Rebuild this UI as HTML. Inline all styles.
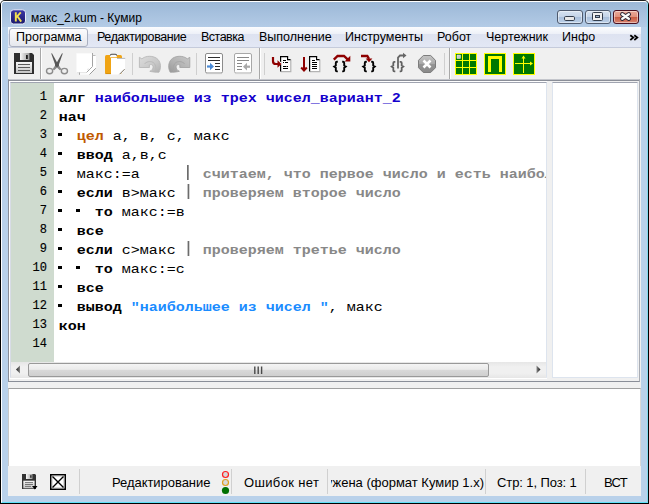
<!DOCTYPE html>
<html><head><meta charset="utf-8">
<style>
*{margin:0;padding:0;box-sizing:border-box}
html,body{width:649px;height:504px;overflow:hidden;background:#fff}
body{position:relative;font-family:"Liberation Sans",sans-serif}
.a{position:absolute}
#win{left:0;top:0;width:649px;height:504px;background:#b9d1ea;border:1px solid #000;border-top-color:#1e1e1e;border-radius:5px 5px 0 0}
#win2{left:1px;top:1px;width:647px;height:502px;border-left:1px solid #fff;border-top:1px solid #fff;border-right:1px solid #7fd8ec;border-bottom:1px solid #5ee0f8;border-radius:4px 4px 0 0}
#title{left:2px;top:2px;width:645px;height:25px;background:linear-gradient(#9cb8d7,#b3cbe6);border-radius:3px 3px 0 0}
#ttl{left:31px;top:11px;font-size:12px;color:#000;white-space:nowrap}
.cb{top:10px;height:14px;border:1px solid #4e5a6e;border-radius:3px;background:linear-gradient(#d6e2f0 0,#c4d4e8 50%,#a9bfdb 50%,#bcd0e8 100%);box-shadow:inset 0 0 0 1px rgba(255,255,255,.45)}
#menubar{left:8px;top:27px;width:633px;height:21px;background:linear-gradient(#fbfcfe 0,#eef1f8 33%,#dde2f0 34%,#e3e8f5 100%);border-bottom:1px solid #c5cbdb}
.mi{top:30px;font-size:12.5px;color:#000;white-space:nowrap}
#tb{left:8px;top:48px;width:633px;height:32px;background:#f0f0f0}
#edframe{left:8px;top:79px;width:632px;height:303px;border-top:1px solid #c4c6cc;box-shadow:inset 0 1px 0 #8a8e98;border-left:1px solid #8a8e98;border-right:1px solid #a8acb4;border-bottom:1px solid #8a8e98;background:#f0f0f0}
#code{left:9px;top:81px;width:538px;height:298px;background:#fff}
#codein{left:10px;top:82px;width:537px;height:296px;border-top:1px solid #a0a4b0;border-left:1px solid #d8dce6;border-right:1px solid #dde4ee;border-bottom:1px solid #e6ecf2}
#lnum{left:11px;top:83px;width:43px;height:279px;background:#cfdbcf}
#rpane{left:552px;top:82px;width:86px;height:296px;background:#fff;border-top:1px solid #a0a4b0;border-left:1px solid #dde4ee;border-right:1px solid #dde4ee;border-bottom:1px solid #dde4ee}
.ln{position:absolute;left:0;width:36px;text-align:right;font-size:12px;color:#000;font-family:"Liberation Mono",monospace;-webkit-text-stroke:.15px #000}
#codeclip{left:54px;top:83px;width:492px;height:279px;overflow:hidden}
.cl{position:absolute;left:4.7px;font-family:"Liberation Mono",monospace;font-size:15px;white-space:pre;color:#000;transform:scaleY(.9);transform-origin:0 12px}
.b{font-weight:bold}
.nm{font-weight:bold;color:#1400cc}
.ty{font-weight:bold;color:#c05a00}
.cm{font-weight:bold;color:#888}
.bar{color:#9a9a9a;font-weight:normal;position:relative;left:-1px;top:-1px}
.st{font-weight:bold;color:#1a8cff}
.mk{position:relative;left:-1px;display:inline-block;width:9px;height:3.4px;background:linear-gradient(#000,#000) no-repeat 0 0/4px 3.4px;vertical-align:4.5px}
#hs{left:11px;top:362px;width:535px;height:16px;background:linear-gradient(#e6e6e6,#f0f0f0 30%,#f0f0f0 70%,#e6e6e6)}
#thumb{left:28px;top:363px;width:461px;height:14px;border:1px solid #999;border-radius:2px;background:linear-gradient(#f4f4f4 0,#ebebeb 45%,#d9d9d9 50%,#cfcfcf 100%)}
#out{left:8px;top:388px;width:633px;height:78px;background:#fff;border-top:1px solid #a0a0a0;border-left:1px solid #c8c8c8;border-right:1px solid #d8d8d8}
#status{left:8px;top:466px;width:633px;height:30px;background:#f0f0f0}
.si{top:475px;font-size:13px;color:#000;white-space:nowrap}
</style></head><body>
<div id="win" class="a"></div>
<div id="win2" class="a"></div>
<div id="title" class="a"></div>
<div id="ttl" class="a">макс_2.kum - Кумир</div>
<div class="a cb" style="left:557px;width:26px"></div>
<div class="a cb" style="left:585px;width:26px"></div>
<div class="a cb" style="left:613px;width:26px;border-color:#4a1020;background:linear-gradient(#eaa898 0,#e0907c 50%,#c85a40 50%,#d88470 100%)"></div>

<div id="menubar" class="a"></div>
<div class="a" style="left:9px;top:28px;width:79px;height:19px;border:1px solid #aab0c0;border-radius:3px;background:linear-gradient(#fcfcfd,#e6e8ee)"></div>
<div class="a mi" style="left:16px;top:30px">Программа</div>
<div class="a mi" style="left:97px;letter-spacing:-.42px">Редактирование</div>
<div class="a mi" style="left:201px;letter-spacing:-.5px">Вставка</div>
<div class="a mi" style="left:259px">Выполнение</div>
<div class="a mi" style="left:345px">Инструменты</div>
<div class="a mi" style="left:437px">Робот</div>
<div class="a mi" style="left:486px">Чертежник</div>
<div class="a mi" style="left:562px">Инфо</div>

<div id="tb" class="a"></div>
<div class="a" style="left:8px;top:79px;width:633px;height:388px;background:#f0f0f0"></div>

<div id="edframe" class="a"></div>
<div id="code" class="a"></div>
<div id="codein" class="a"></div>
<div id="lnum" class="a">
<div class="ln" style="top:7px">1</div>
<div class="ln" style="top:26px">2</div>
<div class="ln" style="top:45px">3</div>
<div class="ln" style="top:64px">4</div>
<div class="ln" style="top:83px">5</div>
<div class="ln" style="top:102px">6</div>
<div class="ln" style="top:121px">7</div>
<div class="ln" style="top:140px">8</div>
<div class="ln" style="top:159px">9</div>
<div class="ln" style="top:178px">10</div>
<div class="ln" style="top:197px">11</div>
<div class="ln" style="top:216px">12</div>
<div class="ln" style="top:235px">13</div>
<div class="ln" style="top:254px">14</div>
</div>
<div id="codeclip" class="a">
<div class="cl" style="top:7px"><span class="b">алг</span> <span class="nm">наибольшее из трех чисел_вариант_2</span></div>
<div class="cl" style="top:26px"><span class="b">нач</span></div>
<div class="cl" style="top:45px">  <span class="ty">цел</span> а, в, с, макс</div>
<div class="cl" style="top:64px">  <span class="b">ввод</span> а,в,с</div>
<div class="cl" style="top:83px">  макс:=а       <span class="cm">считаем, что первое число и есть наибольшее</span></div>
<div class="cl" style="top:102px">  <span class="b">если</span> в&gt;макс   <span class="cm">проверяем второе число</span></div>
<div class="cl" style="top:121px">    <span class="b">то</span> макс:=в</div>
<div class="cl" style="top:140px">  <span class="b">все</span></div>
<div class="cl" style="top:159px">  <span class="b">если</span> с&gt;макс   <span class="cm">проверяем третье число</span></div>
<div class="cl" style="top:178px">    <span class="b">то</span> макс:=с</div>
<div class="cl" style="top:197px">  <span class="b">все</span></div>
<div class="cl" style="top:216px">  <span class="b">вывод</span> <span class="st">"наибольшее из чисел "</span>, макс</div>
<div class="cl" style="top:235px"><span class="b">кон</span></div>
<div class="cl" style="top:254px"></div>
</div>
<div id="hs" class="a"></div>
<div id="thumb" class="a"></div>
<div id="rpane" class="a"></div>

<div id="out" class="a"></div>
<div id="status" class="a"></div>
<div class="a si" style="left:112px;letter-spacing:-.05px">Редактирование</div>
<div class="a si" style="left:244px;letter-spacing:.35px">Ошибок нет</div>
<div class="a" style="left:331px;top:466px;width:153px;height:30px;overflow:hidden"><div class="a si" style="right:0;top:9px">загружена (формат Кумир 1.x)</div></div>
<div class="a si" style="left:497px;letter-spacing:-.1px">Стр: 1, Поз: 1</div>
<div class="a si" style="left:604px;letter-spacing:-.7px">ВСТ</div>
<svg class="a" style="left:0;top:0" width="649" height="504" viewBox="0 0 649 504">
<defs>
<linearGradient id="gShut" x1="0" y1="0" x2="1" y2="0"><stop offset="0" stop-color="#fafafa"/><stop offset="1" stop-color="#9a9a9a"/></linearGradient>
<linearGradient id="gLab" x1="0" y1="0" x2="0" y2="1"><stop offset="0" stop-color="#f6f6f6"/><stop offset="1" stop-color="#c4c4c4"/></linearGradient>
<linearGradient id="gUndo" x1="0" y1="0" x2="1" y2="1"><stop offset="0" stop-color="#dcdcdc"/><stop offset=".6" stop-color="#c8c8c8"/><stop offset="1" stop-color="#b0b0b0"/></linearGradient>
<linearGradient id="gRedo" x1="0" y1="0" x2="1" y2="1"><stop offset="0" stop-color="#c8c8c8"/><stop offset=".6" stop-color="#b0b0b0"/><stop offset="1" stop-color="#989898"/></linearGradient>
<linearGradient id="gStop" x1="0" y1="0" x2="0" y2="1"><stop offset="0" stop-color="#c4c4c4"/><stop offset=".5" stop-color="#a8a8a8"/><stop offset=".5" stop-color="#959595"/><stop offset="1" stop-color="#8a8a8a"/></linearGradient>
<linearGradient id="gK" x1="0" y1="0" x2="0" y2="1"><stop offset="0" stop-color="#3a36a8"/><stop offset="1" stop-color="#1c1a6c"/></linearGradient>
<linearGradient id="gArrL" x1="0" y1="0" x2="1" y2="0"><stop offset="0" stop-color="#1a1a1a"/><stop offset="1" stop-color="#8a8a8a"/></linearGradient>
<linearGradient id="gArrR" x1="1" y1="0" x2="0" y2="0"><stop offset="0" stop-color="#1a1a1a"/><stop offset="1" stop-color="#8a8a8a"/></linearGradient>
</defs>
<!-- title icon -->
<rect x="10.5" y="9.8" width="15" height="14.2" rx="3" fill="url(#gK)" stroke="#e8eef8" stroke-width="1"/>
<path d="M15.8,12.2 V21.6 M15.8,17.8 L20.8,12.3 M17.4,16.2 L21.2,21.6" stroke="#f4e050" stroke-width="1.9" fill="none"/>
<!-- caption glyphs -->
<rect x="564.5" y="16.5" width="10" height="4" rx="1.2" fill="#e8e8e8" stroke="#333d4c" stroke-width="1"/>
<rect x="592.5" y="12.5" width="10" height="8" rx="1" fill="#f0f0f0" stroke="#333d4c" stroke-width="1"/>
<rect x="595.5" y="15.5" width="4" height="2" fill="#9fb4cc" stroke="#333d4c" stroke-width="1"/>
<path d="M622.3,14.3 L628.8,18.8 M628.8,14.3 L622.3,18.8" stroke="#2a2434" stroke-width="4.4" fill="none" stroke-linecap="round"/>
<path d="M622.3,14.3 L628.8,18.8 M628.8,14.3 L622.3,18.8" stroke="#fafafa" stroke-width="2.4" fill="none" stroke-linecap="round"/>
<!-- menu chevrons -->
<path d="M630.3,35.2 L633.3,37.6 L630.3,40 M634.3,35.2 L637.3,37.6 L634.3,40" stroke="#000" stroke-width="1.8" fill="none"/>

<!-- toolbar boundaries -->
<rect x="40" y="48" width="1" height="31" fill="#a8a8a8"/><rect x="41" y="48" width="1" height="31" fill="#fff"/>
<rect x="259" y="48" width="1" height="31" fill="#a8a8a8"/><rect x="260" y="48" width="1" height="31" fill="#fff"/>
<rect x="449" y="48" width="1" height="31" fill="#a8a8a8"/><rect x="450" y="48" width="1" height="31" fill="#fff"/>
<rect x="132" y="53" width="1" height="22" fill="#cfcfcf"/>
<rect x="196" y="53" width="1" height="22" fill="#cfcfcf"/>
<rect x="264" y="53" width="1" height="22" fill="#cfcfcf"/>
<rect x="444" y="53" width="1" height="22" fill="#cfcfcf"/>

<!-- save -->
<path d="M14,53 H32 L34,55 V74 H14 Z" fill="#2e2e2e"/>
<rect x="20" y="53" width="9.5" height="7" fill="url(#gShut)"/>
<rect x="26" y="55" width="1.8" height="4" fill="#1e1e1e"/>
<rect x="16" y="62" width="16" height="11" fill="url(#gLab)"/>
<path d="M18,64.5 H30 M18,67.5 H30 M18,70.5 H30" stroke="#5a5a5a" stroke-width="1"/>

<!-- scissors -->
<path d="M52.5,69.2 L55.8,64.6 L58.2,66.4 L54.2,70.2 Z" fill="#888"/>
<path d="M61.5,69.2 L58.2,64.6 L55.8,66.4 L59.8,70.2 Z" fill="#888"/>
<ellipse cx="49.6" cy="71.1" rx="3.1" ry="2.7" fill="none" stroke="#8c8c8c" stroke-width="1.4"/>
<ellipse cx="64.4" cy="71.1" rx="3.1" ry="2.7" fill="none" stroke="#8c8c8c" stroke-width="1.4"/>
<path d="M51.24,53.56 L51.96,53.24 L58.37,64.68 L55.63,65.92 Z" fill="#575757"/>
<path d="M62.76,53.56 L62.04,53.24 L55.63,64.68 L58.37,65.92 Z" fill="#575757"/>
<ellipse cx="57" cy="65.3" rx="1.8" ry="1.7" fill="#555"/>
<!-- copy -->
<path d="M80,55.5 H96 V68.5 L90,74.5 H80 Z" fill="#fff"/>
<path d="M76.5,53 H92.5 V66.5 L86.5,72.5 H76.5 Z" fill="#fff"/>
<path d="M76.5,53.2 H92" stroke="#f4f4f4" stroke-width=".6"/>
<path d="M92.5,53 V66.5 L86.5,72.5" stroke="#a4a4a4" stroke-width="1" fill="none"/>
<path d="M77,72.7 H86" stroke="#dadada" stroke-width=".8"/>
<path d="M92.5,55.5 H95.5" stroke="#b4b4b4" stroke-width=".9"/>
<path d="M89.5,74.5 L95.8,68.2" stroke="#9a9a9a" stroke-width="1"/>
<path d="M79.5,72.5 V74.8" stroke="#a8a8a8" stroke-width="1"/>
<path d="M87,69.5 Q89,68.5 89.5,69.8" stroke="#d8d8d8" stroke-width=".7" fill="none"/>
<!-- paste -->
<rect x="105" y="55" width="17" height="19" rx="1.5" fill="#f0a414"/>
<path d="M105.3,73.6 H111" stroke="#c88000" stroke-width=".6"/>
<rect x="110" y="54.5" width="6.8" height="2.8" fill="#fafafa"/>
<path d="M110.4,55.6 Q110.4,54.2 111.6,54.2 H115.4 Q116.6,54.2 116.6,55.6" stroke="#4a4a4a" stroke-width="1.1" fill="none"/>
<path d="M111,58 H125 V70 L120.5,74.5 H111 Z" fill="#fff"/>
<path d="M117,58.4 H125.2" stroke="#9a9a9a" stroke-width=".7"/>
<path d="M119.6,74.2 L124.6,69.2" stroke="#6a6050" stroke-width=".9"/>
<!-- undo / redo -->
<path d="M139.4,57.3 L141.8,58.8 L144.2,57.4 C148,55.6 154.5,55.8 158,59.5 C161,62.8 161.3,68 159,72.2 C156,72.4 152.5,72 149.8,71.3 C152.2,70.2 153.4,68.5 153,66.4 C152.6,64.6 151,64.2 149.4,64.9 L149.4,67.5 L139.4,67.5 Z" fill="url(#gUndo)" stroke="#b4b4b4" stroke-width=".8" stroke-linejoin="round"/>
<path d="M144.5,64 C146,61.8 150,60.8 153,62.3 C155.8,63.8 156.5,68 155.5,71.5" stroke="#b8b8b8" stroke-width=".9" fill="none"/>
<g transform="translate(329.2,0) scale(-1,1)"><path d="M139.4,57.3 L141.8,58.8 L144.2,57.4 C148,55.6 154.5,55.8 158,59.5 C161,62.8 161.3,68 159,72.2 C156,72.4 152.5,72 149.8,71.3 C152.2,70.2 153.4,68.5 153,66.4 C152.6,64.6 151,64.2 149.4,64.9 L149.4,67.5 L139.4,67.5 Z" fill="url(#gRedo)" stroke="#a0a0a0" stroke-width=".8" stroke-linejoin="round"/><path d="M144.5,64 C146,61.8 150,60.8 153,62.3 C155.8,63.8 156.5,68 155.5,71.5" stroke="#a4a4a4" stroke-width=".9" fill="none"/></g>
<!-- indent -->
<rect x="205.5" y="53.5" width="17" height="19.5" rx="1.5" fill="#fff" stroke="#8c8c8c" stroke-width="1"/>
<path d="M206,73.5 H222" stroke="#c8c8c8" stroke-width="1.2"/>
<path d="M208,57.5 H220 M208,60.5 H220 M215,63.5 H220 M215,66.5 H220 M215,69.5 H220" stroke="#2e2e2e" stroke-width="1.1"/>
<path d="M207,66.5 H212" stroke="#4a8ad6" stroke-width="2.2"/>
<path d="M210,62.8 L214,66.5 L210,70.2 Z" fill="#4a8ad6"/>
<!-- unindent -->
<rect x="234.5" y="53.5" width="17" height="19.5" rx="1.5" fill="#fff" stroke="#a8a8a8" stroke-width="1"/>
<path d="M235,73.5 H251" stroke="#d4d4d4" stroke-width="1.2"/>
<path d="M237,57.5 H249 M237,60.5 H249 M237,63.5 H242 M237,66.5 H242 M237,69.5 H242" stroke="#888" stroke-width="1.1"/>
<path d="M245,66.7 H250" stroke="#a8a8a8" stroke-width="2.2"/>
<path d="M247,62.8 L243,66.7 L247,70.5 Z" fill="#a8a8a8"/>

<!-- run 1 -->
<path d="M280.5,56.5 H287.5 L290.5,59.5 V71 H280.5 Z" fill="#fff"/>
<path d="M290.8,59.5 V71.6 H281" stroke="#b4b4b4" stroke-width="1.2" fill="none"/>
<path d="M280.6,71.5 V56.6 H287.6 V59.6 H290.5" fill="none" stroke="#000" stroke-width="1.2"/>
<path d="M283,60.5 H286 M283,62.5 H284 M285,62.5 H288 M283,66.5 H286.5 M287,66.5 H288 M283,68.5 H288" stroke="#000" stroke-width="1"/>
<rect x="279.5" y="61.8" width="2" height="3" fill="#fff"/>
<path d="M273,57 V61.2 Q273,64 276,64 H279" stroke="#8e0000" stroke-width="2.2" fill="none"/>
<path d="M277.5,60.3 L281.5,64 L277.5,67.7 Z" fill="#8e0000"/>
<!-- run 2 -->
<path d="M309.5,56.5 H316.5 L319.5,59.5 V71 H309.5 Z" fill="#fff"/>
<path d="M319.8,59.5 V71.6 H310" stroke="#b4b4b4" stroke-width="1.2" fill="none"/>
<path d="M309.6,71.5 V56.6 H316.6 V59.6 H319.5" fill="none" stroke="#000" stroke-width="1.2"/>
<path d="M312,60.5 H315 M312,62.5 H317 M312,64.5 H317 M312,66.5 H317 M312,68.5 H317" stroke="#000" stroke-width="1"/>
<path d="M304,57 V70" stroke="#8e0000" stroke-width="2"/>
<path d="M301.2,67.5 L304,70.6 L306.8,67.5" stroke="#8e0000" stroke-width="2" fill="none"/>
<!-- step over -->
<path d="M333.8,59.6 L337.6,56 H344 L347.6,59.4" stroke="#8e0000" stroke-width="2.4" fill="none"/>
<path d="M344.6,61.6 L350.3,61.6 L350.3,55.8 Z" fill="#8e0000"/>
<g id="braces" stroke="#000" stroke-width="1.9" fill="none">
<path d="M337.8,61.8 H336.8 Q335.8,61.8 335.8,63 V65.5 L334.2,66.6 L335.8,67.7 V70.2 Q335.8,71.4 336.8,71.4 H337.8"/>
<path d="M342.2,61.8 H343.2 Q344.2,61.8 344.2,63 V65.5 L345.8,66.6 L344.2,67.7 V70.2 Q344.2,71.4 343.2,71.4 H342.2"/>
</g>
<!-- step in -->
<path d="M361,56 H367.3 L369,58.8" stroke="#8e0000" stroke-width="2.4" fill="none"/>
<path d="M365.6,58.4 H372.4 L369,62.2 Z" fill="#8e0000"/>
<g stroke="#000" stroke-width="1.9" fill="none" transform="translate(29,0)">
<path d="M337.8,61.8 H336.8 Q335.8,61.8 335.8,63 V65.5 L334.2,66.6 L335.8,67.7 V70.2 Q335.8,71.4 336.8,71.4 H337.8"/>
<path d="M342.2,61.8 H343.2 Q344.2,61.8 344.2,63 V65.5 L345.8,66.6 L344.2,67.7 V70.2 Q344.2,71.4 343.2,71.4 H342.2"/>
</g>
<!-- step out -->
<g stroke="#606060" stroke-width="1.8" fill="none" transform="translate(57.5,0)">
<path d="M337.8,61.8 H336.8 Q335.8,61.8 335.8,63 V65.5 L334.2,66.6 L335.8,67.7 V70.2 Q335.8,71.4 336.8,71.4 H337.8"/>
<path d="M342.2,61.8 H343.2 Q344.2,61.8 344.2,63 V65.5 L345.8,66.6 L344.2,67.7 V70.2 Q344.2,71.4 343.2,71.4 H342.2"/>
</g>
<path d="M398,68.5 V57.5 L400,55.5 H404" stroke="#666" stroke-width="1.8" fill="none"/>
<path d="M403,52.8 L406.5,55.5 L403,58.2 Z" fill="#666"/>

<!-- stop -->
<path d="M423.3,55.5 H430.7 L435.5,60.3 V67.7 L430.7,72.5 H423.3 L418.5,67.7 V60.3 Z" fill="url(#gStop)" stroke="#7c7c7c" stroke-width="1"/>
<path d="M423.5,60.5 L430.5,67.5 M430.5,60.5 L423.5,67.5" stroke="#fff" stroke-width="2.6"/>

<!-- robot grid -->
<rect x="455" y="53" width="22" height="22" fill="#ffff00"/>
<rect x="456" y="54" width="6" height="6" fill="#007800"/><rect x="463" y="54" width="6" height="6" fill="#007800"/><rect x="470" y="54" width="6" height="6" fill="#007800"/>
<rect x="456" y="61" width="6" height="6" fill="#007800"/><rect x="463" y="61" width="6" height="6" fill="#007800"/><rect x="470" y="61" width="6" height="6" fill="#007800"/>
<rect x="456" y="68" width="6" height="6" fill="#007800"/><rect x="463" y="68" width="6" height="6" fill="#007800"/><rect x="470" y="68" width="6" height="6" fill="#007800"/>
<rect x="457" y="55" width="3.5" height="3.5" fill="#c8c8c8" stroke="#eee" stroke-width=".5"/>
<!-- P icon -->
<rect x="484" y="53" width="22" height="22" fill="#ffff00"/>
<rect x="485" y="54" width="20" height="20" fill="#007800"/>
<path d="M488,72 V56 H502 V72 H499 V59 H491 V72 Z" fill="#ffff00"/>
<!-- axes icon -->
<rect x="513" y="53" width="22" height="22" fill="#ffff00"/>
<rect x="514" y="54" width="20" height="20" fill="#007800"/>
<path d="M523.5,73 V56.5 M515,63.5 H532" stroke="#ffff00" stroke-width="1"/>
<path d="M521.5,58.5 L523.5,55.5 L525.5,58.5 Z M530,61.5 L533,63.5 L530,65.5 Z" fill="#ffff00"/>

<!-- markers -->
<rect x="58" y="133" width="4" height="3" fill="#000"/>
<rect x="58" y="152" width="4" height="3" fill="#000"/>
<rect x="58" y="171" width="4" height="3" fill="#000"/>
<rect x="58" y="190" width="4" height="3" fill="#000"/>
<rect x="58" y="209" width="4" height="3" fill="#000"/>
<rect x="76" y="209" width="4" height="3" fill="#000"/>
<rect x="58" y="228" width="4" height="3" fill="#000"/>
<rect x="58" y="247" width="4" height="3" fill="#000"/>
<rect x="58" y="266" width="4" height="3" fill="#000"/>
<rect x="76" y="266" width="4" height="3" fill="#000"/>
<rect x="58" y="285" width="4" height="3" fill="#000"/>
<rect x="58" y="304" width="4" height="3" fill="#000"/>
<rect x="187" y="165" width="1.7" height="15" fill="#6c6c6c"/>
<rect x="187.6" y="184" width="1.7" height="15" fill="#6c6c6c"/>
<rect x="187.6" y="241" width="1.7" height="15" fill="#6c6c6c"/>
<!-- scroll arrows -->
<path d="M16,369.5 L20,365.5 V373.5 Z" fill="url(#gArrL)"/>
<path d="M540.5,369.5 L536.5,365.5 V373.5 Z" fill="url(#gArrR)"/>
<path d="M254.8,366.5 V374 M258.2,366.5 V374 M261.6,366.5 V374" stroke="#4a4a4a" stroke-width="1.4"/>

<!-- status icons -->
<path d="M22,474 H35 L36,475 V489 H22 Z" fill="#333"/>
<rect x="26" y="474" width="6.5" height="5" fill="url(#gShut)"/>
<rect x="30.2" y="475.2" width="1.3" height="2.6" fill="#222"/>
<rect x="23.3" y="480.7" width="11.3" height="7.6" fill="url(#gLab)"/>
<path d="M25,482.6 H33 M25,484.5 H33 M25,486.4 H31" stroke="#666" stroke-width=".9"/>
<path d="M32,486 H37.5 L34.8,489.5 Z" fill="#000"/>
<rect x="50.75" y="474.75" width="14.5" height="14.5" fill="#fff" stroke="#000" stroke-width="1.5"/>
<rect x="52.3" y="476.3" width="11.4" height="11.4" rx="1" fill="none" stroke="#bbb" stroke-width=".6"/>
<path d="M52.5,476.5 L63.5,487.5 M63.5,476.5 L52.5,487.5" stroke="#000" stroke-width="1.4"/>
<rect x="79" y="469" width="1" height="25" fill="#d0d0d0"/><rect x="327" y="469" width="1" height="25" fill="#d0d0d0"/><rect x="485" y="469" width="1" height="25" fill="#d0d0d0"/><rect x="585" y="469" width="1" height="25" fill="#d0d0d0"/>
<rect x="231" y="469" width="1" height="25" fill="#d0d0d0"/>
<circle cx="225.5" cy="474.5" r="3" fill="#d8d8d8" stroke="#ff2020" stroke-width="1.2"/>
<circle cx="225.5" cy="482.5" r="3" fill="#d8d8d8" stroke="#e0a020" stroke-width="1.2"/>
<circle cx="225.5" cy="490.5" r="3.6" fill="#007000"/>
</svg>

</body></html>
